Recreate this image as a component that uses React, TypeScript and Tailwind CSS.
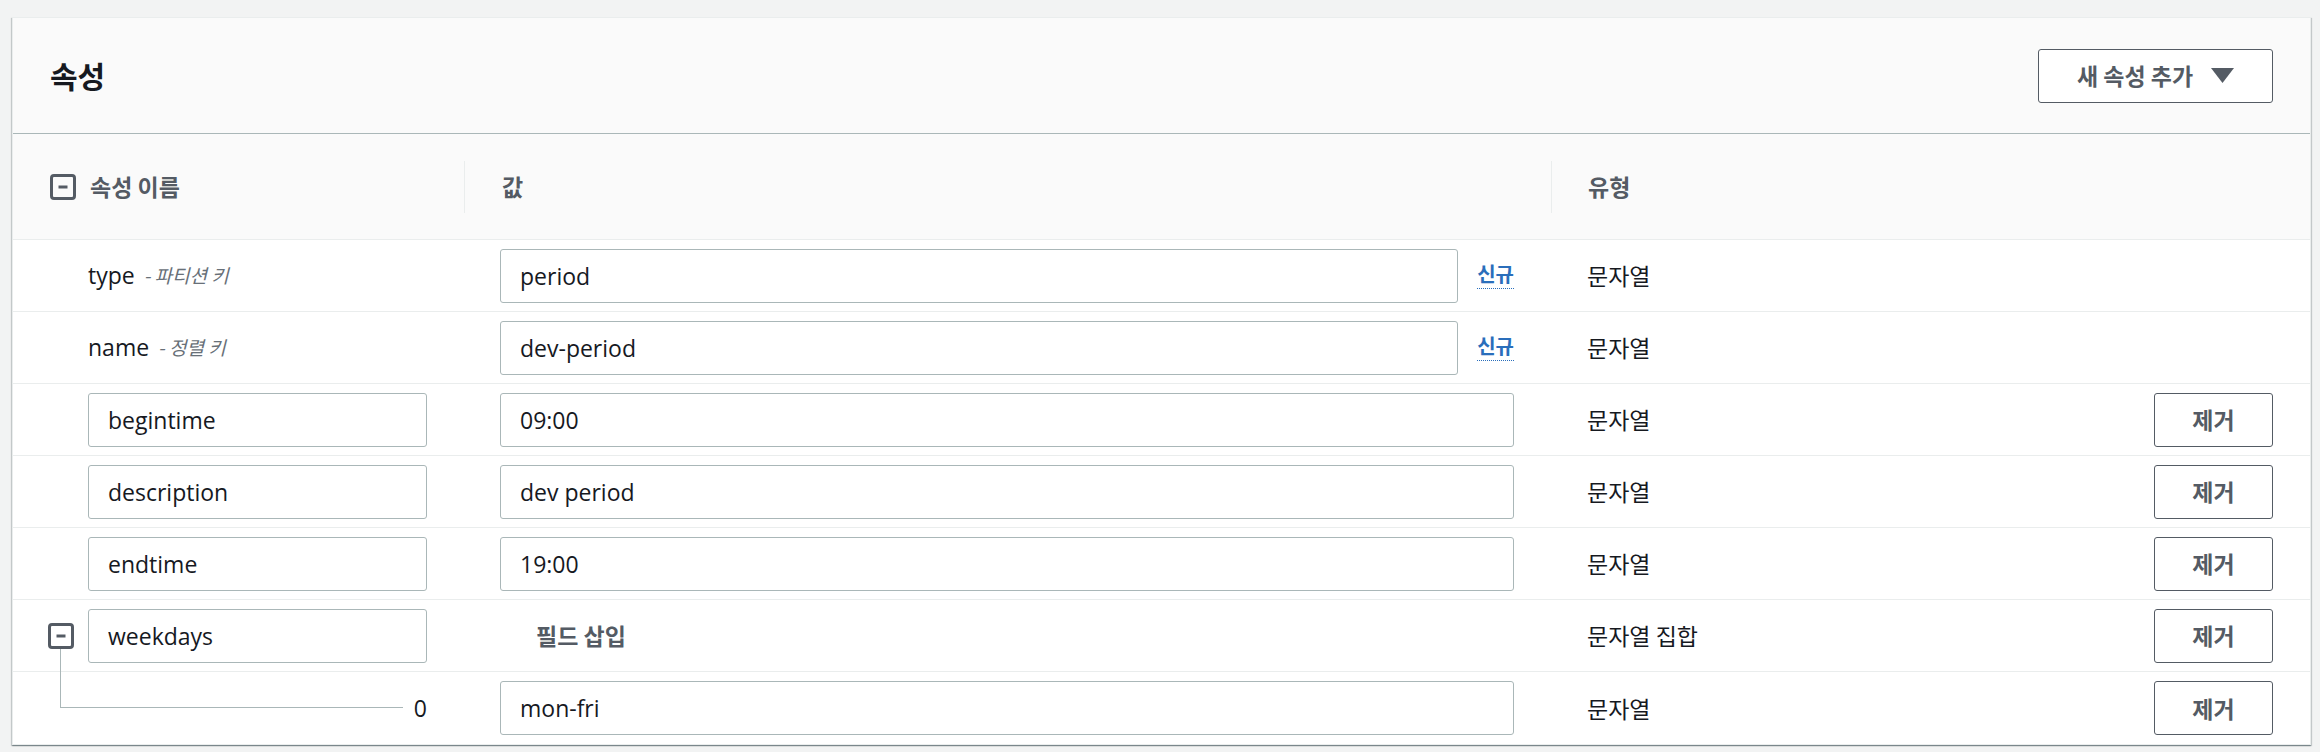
import React from "react";

const latin = "font-['Open_Sans','Noto_Sans_CJK_KR',sans-serif]";
const kr = "font-['Noto_Sans_CJK_KR','Open_Sans',sans-serif]";

type Row = {
  key: string;
  keyNote?: string;
  value?: string;
  isNew?: boolean;
  type: string;
  removable: boolean;
  kind?: "set" | "child";
};

const rows: Row[] = [
  { key: "type", keyNote: "파티션 키", value: "period", isNew: true, type: "문자열", removable: false },
  { key: "name", keyNote: "정렬 키", value: "dev-period", isNew: true, type: "문자열", removable: false },
  { key: "begintime", value: "09:00", type: "문자열", removable: true },
  { key: "description", value: "dev period", type: "문자열", removable: true },
  { key: "endtime", value: "19:00", type: "문자열", removable: true },
  { key: "weekdays", type: "문자열 집합", removable: true, kind: "set" },
  { key: "0", value: "mon-fri", type: "문자열", removable: true, kind: "child" },
];

function CollapseIcon() {
  return (
    <svg width="26" height="26" viewBox="0 0 26 26" className="shrink-0">
      <rect x="1.5" y="1.5" width="23" height="23" rx="2.5" fill="none" stroke="#545b64" strokeWidth="3" />
      <line x1="8.5" y1="13" x2="17.5" y2="13" stroke="#545b64" strokeWidth="3" />
    </svg>
  );
}

function TextBox({ value, className = "" }: { value: string; className?: string }) {
  return (
    <input
      readOnly
      value={value}
      className={`h-[54px] border border-[#aab7b8] rounded-[3px] bg-white pl-[19px] text-[23px] text-[#16191f] outline-none ${latin} ${className}`}
    />
  );
}

function AttributeRow({ row, last }: { row: Row; last: boolean }) {
  const border = last ? "" : "border-b border-[#eaeded]";
  return (
    <div className={`grid grid-cols-[451px_1087px_1fr] h-[72px] bg-white ${border}`}>
      {row.kind === "set" ? (
        <div className="flex items-center pl-[35px] gap-[14px]">
          <CollapseIcon />
          <TextBox value={row.key} className="w-[339px]" />
        </div>
      ) : row.kind === "child" ? (
        <div className="relative flex items-center justify-end pr-[37px]">
          <div className="absolute left-[47px] top-[-23px] h-[59px] w-[343px] border-l border-b border-[#aab7b8]" />
          <span className={`text-[23px] text-[#16191f] ${latin}`}>{row.key}</span>
        </div>
      ) : row.keyNote ? (
        <div className="flex items-center pl-[75px]">
          <span className={`text-[23px] text-[#16191f] ${latin}`}>{row.key}</span>
          <span className={`ml-[9px] text-[19px] italic text-[#687078] ${kr}`}>- {row.keyNote}</span>
        </div>
      ) : (
        <div className="flex items-center pl-[75px]">
          <TextBox value={row.key} className="w-[339px]" />
        </div>
      )}

      {row.value !== undefined ? (
        <div className="flex items-center gap-[19px] pl-[36px] pr-[37px]">
          <TextBox value={row.value} className="flex-1 min-w-0" />
          {row.isNew && (
            <span className={`pb-[4px] pt-[2px] border-b border-dotted border-[#2a6ebb] text-[20px] font-bold text-[#2a6ebb] leading-none ${kr}`}>
              신규
            </span>
          )}
        </div>
      ) : (
        <div className="flex items-center pl-[72px]">
          <span className={`text-[23px] font-bold text-[#545b64] ${kr}`}>필드 삽입</span>
        </div>
      )}

      <div className="flex items-center justify-between pl-[36px] pr-[37px]">
        <span className={`text-[23px] text-[#16191f] ${kr}`}>{row.type}</span>
        {row.removable && (
          <button className={`w-[119px] h-[54px] border border-[#545b64] rounded-[3px] bg-white text-[23px] font-bold text-[#545b64] ${kr}`}>
            제거
          </button>
        )}
      </div>
    </div>
  );
}

export default function App() {
  return (
    <div className="h-screen bg-[#f2f3f3] pt-[17px] pl-[12px] pr-[9px]">
      <div className="border border-[#eaeded] bg-white shadow-[0_1px_1px_0_rgba(0,28,36,0.3),1px_1px_1px_0_rgba(0,28,36,0.15),-1px_1px_1px_0_rgba(0,28,36,0.15)]">
        <div className="flex items-center justify-between h-[116px] pl-[37px] pr-[37px] bg-[#fafafa] border-b border-[#aab7b8]">
          <h2 className={`text-[30px] font-bold text-[#16191f] ${kr}`}>속성</h2>
          <button className={`flex items-center justify-center gap-[18px] w-[235px] h-[54px] border border-[#545b64] rounded-[3px] bg-white text-[23px] font-bold text-[#545b64] ${kr}`}>
            새 속성 추가
            <svg width="23" height="15" viewBox="0 0 23 15">
              <polygon points="0,0 23,0 11.5,15" fill="#545b64" />
            </svg>
          </button>
        </div>

        <div className="grid grid-cols-[451px_1087px_1fr] h-[106px] bg-[#fafafa] border-b border-[#eaeded]">
          <div className="flex items-center pl-[37px] gap-[14px]">
            <CollapseIcon />
            <span className={`text-[23px] font-bold text-[#545b64] ${kr}`}>속성 이름</span>
          </div>
          <div className="flex items-center">
            <div className="flex items-center h-[52px] border-l border-[#eaeded] pl-[37px]">
              <span className={`text-[23px] font-bold text-[#545b64] ${kr}`}>값</span>
            </div>
          </div>
          <div className="flex items-center">
            <div className="flex items-center h-[52px] border-l border-[#eaeded] pl-[36px]">
              <span className={`text-[23px] font-bold text-[#545b64] ${kr}`}>유형</span>
            </div>
          </div>
        </div>

        {rows.map((row, i) => (
          <AttributeRow key={i} row={row} last={i === rows.length - 1} />
        ))}
      </div>
    </div>
  );
}
